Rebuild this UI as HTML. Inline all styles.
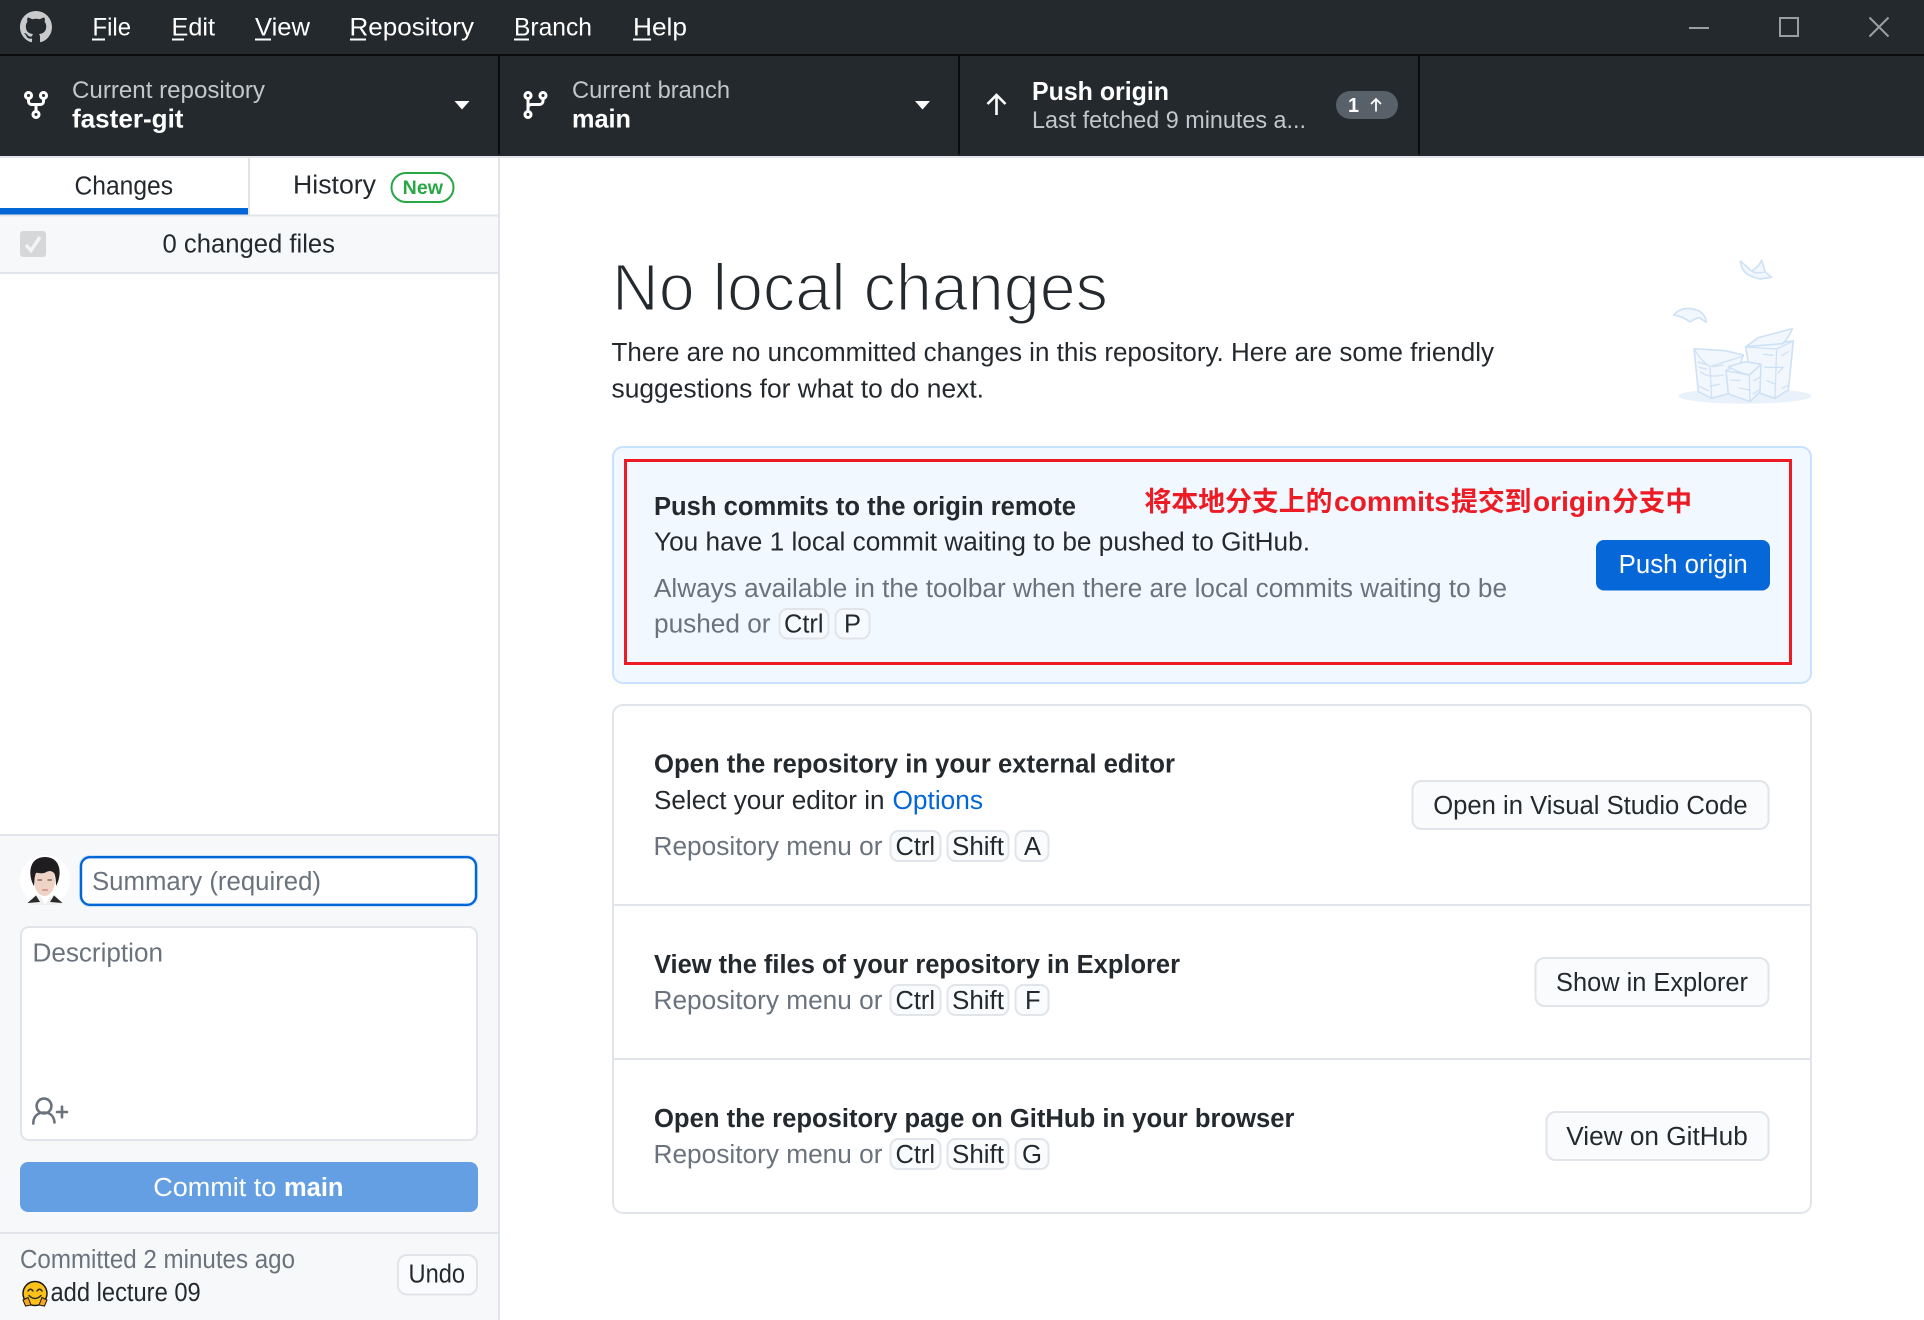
<!DOCTYPE html>
<html lang="en"><head><meta charset="utf-8"><title>GitHub Desktop</title>
<style>
html,body{margin:0;padding:0;background:#fff;width:1924px;height:1320px;overflow:hidden}
svg{display:block}
text{font-family:"Liberation Sans","Noto Sans CJK SC",sans-serif;font-size:25.5px;fill:#24292e;white-space:pre}
.b{font-weight:700}
.g{fill:#6a737d}
.m{fill:#fff;font-size:25px}
.s{fill:#c3c7cb;font-size:24px}
.w{fill:#fff;font-weight:700;font-size:26px}
.k{fill:#fafbfc;stroke:#e1e4e8;stroke-width:2}
.c{fill:#f6faff;stroke:#e1e4e8;stroke-width:2}
.p{stroke:#cfe2f5;stroke-width:5;fill:#f2f7fd;stroke-linejoin:round;stroke-linecap:round}
.l{stroke:#cfe2f5;stroke-width:4;fill:none;stroke-linecap:round}
.r{font-weight:700;fill:#ed1c24}
</style></head><body>
<svg xmlns="http://www.w3.org/2000/svg" width="1924" height="1320" viewBox="0 0 1924 1320">
<rect width="1924" height="1320" fill="#fff"/>

<!-- title bar -->
<rect width="1924" height="54" fill="#24292e"/>
<rect y="54" width="1924" height="2" fill="#0b0c0e"/>
<path transform="translate(20,11) scale(2)" fill="#c8cacc" d="M8 0C3.58 0 0 3.58 0 8c0 3.54 2.29 6.53 5.47 7.59.4.07.55-.17.55-.38 0-.19-.01-.82-.01-1.49-2.01.37-2.53-.49-2.69-.94-.09-.23-.48-.94-.82-1.13-.28-.15-.68-.52-.01-.53.63-.01 1.08.58 1.23.82.72 1.21 1.87.87 2.33.66.07-.52.28-.87.51-1.07-1.78-.2-3.64-.89-3.64-3.95 0-.87.31-1.59.82-2.15-.08-.2-.36-1.02.08-2.12 0 0 .67-.21 2.2.82.64-.18 1.32-.27 2-.27.68 0 1.36.09 2 .27 1.53-1.04 2.2-.82 2.2-.82.44 1.1.16 1.92.08 2.12.51.56.82 1.27.82 2.15 0 3.07-1.87 3.75-3.65 3.95.29.25.54.73.54 1.48 0 1.07-.01 1.93-.01 2.2 0 .21.15.46.55.38A8.013 8.013 0 0016 8c0-4.42-3.58-8-8-8z"/>
<text class="m" x="92.5" y="35.5" textLength="38.5" lengthAdjust="spacingAndGlyphs">File</text>
<text class="m" x="171.5" y="35.5" textLength="43.5" lengthAdjust="spacingAndGlyphs">Edit</text>
<text class="m" x="255" y="35.5" textLength="55" lengthAdjust="spacingAndGlyphs">View</text>
<text class="m" x="349.5" y="35.5" textLength="124.5" lengthAdjust="spacingAndGlyphs">Repository</text>
<text class="m" x="514" y="35.5" textLength="78" lengthAdjust="spacingAndGlyphs">Branch</text>
<text class="m" x="633" y="35.5" textLength="54" lengthAdjust="spacingAndGlyphs">Help</text>
<g fill="#fff">
<rect x="92" y="38.5" width="13" height="2"/><rect x="172" y="38.5" width="12" height="2"/><rect x="255" y="38.5" width="16" height="2"/><rect x="350" y="38.5" width="16" height="2"/><rect x="514" y="38.5" width="15" height="2"/><rect x="633" y="38.5" width="18" height="2"/>
</g>
<g fill="none" stroke="#9b9ea1" stroke-width="2">
<path d="M1689 28H1709"/><rect x="1780" y="18" width="18" height="18"/><path d="M1869.5 17.5L1888.5 36.5M1888.5 17.5L1869.5 36.5"/>
</g>

<!-- toolbar -->
<rect y="56" width="1924" height="100" fill="#24292e"/>
<rect y="156" width="1924" height="2" fill="#e1e4e8"/>
<g fill="#0b0c0e"><rect x="498" y="56" width="2" height="98.5"/><rect x="958" y="56" width="2" height="98.5"/><rect x="1418" y="56" width="2" height="98.5"/></g>
<path transform="translate(20,89) scale(2)" fill="#fff" d="M5 5.372v.878c0 .414.336.75.75.75h4.5a.75.75 0 00.75-.75v-.878a2.25 2.25 0 111.5 0v.878a2.25 2.25 0 01-2.25 2.25h-1.5v2.128a2.251 2.251 0 11-1.5 0V8.5h-1.5A2.25 2.25 0 013.5 6.25v-.878a2.25 2.25 0 111.5 0zM5 3.25a.75.75 0 10-1.5 0 .75.75 0 001.5 0zm6.75.75a.75.75 0 100-1.5.75.75 0 000 1.5zm-3 8.75a.75.75 0 10-1.5 0 .75.75 0 001.5 0z"/>
<text class="s" x="72" y="98" textLength="193" lengthAdjust="spacingAndGlyphs">Current repository</text>
<text class="w" x="72" y="127.5" textLength="111.5" lengthAdjust="spacingAndGlyphs">faster-git</text>
<path d="M454.5 101H469.5L462 109.5Z" fill="#fff"/>
<path transform="translate(519.5,89) scale(2)" fill="#fff" d="M9.5 3.25a2.25 2.25 0 113 2.122V6A2.5 2.5 0 0110 8.5H6a1 1 0 00-1 1v1.128a2.251 2.251 0 11-1.5 0V5.372a2.25 2.25 0 111.5 0v1.836A2.492 2.492 0 016 7h4a1 1 0 001-1v-.628A2.25 2.25 0 019.5 3.25zm-6 0a.75.75 0 101.5 0 .75.75 0 00-1.5 0zm8.25-.75a.75.75 0 100 1.5.75.75 0 000-1.5zM4.25 12a.75.75 0 100 1.5.75.75 0 000-1.5z"/>
<text class="s" x="572" y="98" textLength="158" lengthAdjust="spacingAndGlyphs">Current branch</text>
<text class="w" x="572" y="127.5" textLength="59" lengthAdjust="spacingAndGlyphs">main</text>
<path d="M915 101H930L922.5 109.5Z" fill="#fff"/>
<path d="M996.5 95V115M987.5 104L996.5 95L1005.5 104" fill="none" stroke="#fff" stroke-width="2.6"/>
<text class="w" x="1032" y="100" textLength="137" lengthAdjust="spacingAndGlyphs">Push origin</text>
<text class="s" x="1032" y="128" textLength="274" lengthAdjust="spacingAndGlyphs">Last fetched 9 minutes a...</text>
<rect x="1336" y="91" width="62" height="28" rx="14" fill="#586069"/>
<text class="w" x="1348" y="112" textLength="11" lengthAdjust="spacingAndGlyphs" style="font-size:20px">1</text>
<path d="M1376 99V111.5M1371 104L1376 99L1381 104" fill="none" stroke="#fff" stroke-width="1.8"/>

<!-- sidebar -->
<rect x="0" y="158" width="498" height="1162" fill="#f6f8fa"/>
<rect x="498" y="158" width="2" height="1162" fill="#e1e4e8"/>
<rect x="0" y="158" width="498" height="56.5" fill="#fff"/>
<rect x="248" y="158" width="2" height="56.5" fill="#e1e4e8"/>
<rect x="0" y="208" width="248" height="6.5" fill="#0366d6"/>
<rect x="0" y="214.5" width="498" height="2" fill="#e1e4e8"/>
<text x="74.5" y="194.5" textLength="98.5" lengthAdjust="spacingAndGlyphs">Changes</text>
<text x="293" y="193.5" textLength="83" lengthAdjust="spacingAndGlyphs">History</text>
<rect x="391.5" y="173" width="62" height="29" rx="14.5" fill="#fff" stroke="#28a745" stroke-width="2"/>
<text x="402.7" y="194" textLength="40.3" lengthAdjust="spacingAndGlyphs" class="b" style="font-size:19.5px;fill:#28a745">New</text>
<rect x="20" y="231" width="26" height="26" rx="3" fill="#d5d7d9"/>
<path d="M26 245L31 250.5L40 237" fill="none" stroke="#f4f5f6" stroke-width="3.4"/>
<text x="162.5" y="252.5" textLength="172.5" lengthAdjust="spacingAndGlyphs">0 changed files</text>
<rect x="0" y="272" width="498" height="2" fill="#e1e4e8"/>
<rect x="0" y="274" width="498" height="560" fill="#fff"/>
<rect x="0" y="834" width="498" height="2" fill="#e1e4e8"/>

<!-- avatar -->
<circle cx="45" cy="880" r="25" fill="#fff"/>
<path d="M27 904L36 895L41 897L45 905L50 897L55 895L63 904Q55 905 45 905Q35 905 27 904Z" fill="#f1efed"/>
<path d="M27.5 903L36 895.5L40 902Z M62.5 903L54 895.5L50 902Z" fill="#2a2a2c"/>
<ellipse cx="44.5" cy="881" rx="10.5" ry="15" fill="#efd4c6"/>
<path d="M34 886C28 876 28 857 45 857C62 857 62 876 56 886C56 880 55.5 876 54 873C50 869 47 872 44 873C40 874 37 872 36 873C34.5 876 34.500 880 34 886Z" fill="#1f1d1f"/>
<path d="M37.500 880h4.500M47.500 880h4.500" stroke="#6b5850" stroke-width="1.2"/><path d="M42 890h6" stroke="#c98d86" stroke-width="1.400"/>

<!-- summary -->
<rect x="79" y="855" width="399" height="52" rx="11" fill="#c8e1ff"/>
<rect x="81" y="857.2" width="395" height="47.6" rx="9" fill="#fff" stroke="#0366d6" stroke-width="2.4"/>
<text class="g" x="92" y="890" textLength="229" lengthAdjust="spacingAndGlyphs">Summary (required)</text>
<rect x="21" y="927" width="456" height="213" rx="8" fill="#fff" stroke="#e1e4e8" stroke-width="2"/>
<text class="g" x="32.5" y="961.5" textLength="130.5" lengthAdjust="spacingAndGlyphs">Description</text>
<g fill="none" stroke="#6a737d" stroke-width="2.6" stroke-linecap="round">
<circle cx="44" cy="1106" r="7.4"/><path d="M33.3 1123.5C33.3 1116.5 37.5 1112.5 44 1112.500C50.500 1112.500 54 1116.500 54.500 1122.500"/><path d="M57 1112H67M62 1106.700V1117.300"/>
</g>
<rect x="20" y="1162" width="458" height="50" rx="8" fill="#659fe3"/>
<text x="153.3" y="1196" textLength="123" lengthAdjust="spacingAndGlyphs" style="fill:#fff">Commit to</text>
<text x="284" y="1196" textLength="59.5" lengthAdjust="spacingAndGlyphs" class="b" style="fill:#fff">main</text>
<rect x="0" y="1232" width="498" height="2" fill="#e1e4e8"/>
<text class="g" x="20" y="1268" textLength="275" lengthAdjust="spacingAndGlyphs">Committed 2 minutes ago</text>
<circle cx="35" cy="1293.5" r="12" fill="#fcc21b" stroke="#1c1a14" stroke-width="1.5"/>
<path d="M28 1291q2.500-3.500 5 0M37 1291q2.500-3.500 5 0" fill="none" stroke="#2f2f2f" stroke-width="1.5" stroke-linecap="round"/>
<path d="M29 1295.500q6 6 12 0" fill="none" stroke="#2f2f2f" stroke-width="1.5" stroke-linecap="round"/>
<path d="M23 1300l5-2.500 3 7.500-5.500 1zM47 1300l-5-2.500-3 7.500 5.500 1z" fill="#f5a623" stroke="#1c1a14" stroke-width="1"/>
<text x="50.5" y="1301" textLength="150.200" lengthAdjust="spacingAndGlyphs">add lecture 09</text>
<rect class="k" x="398" y="1255" width="79" height="39.5" rx="9"/>
<text x="408.5" y="1282.5" textLength="56.5" lengthAdjust="spacingAndGlyphs">Undo</text>

<!-- main heading -->
<text x="612" y="310.5" textLength="496" lengthAdjust="spacingAndGlyphs" style="font-size:67px;stroke:#fff;stroke-width:1.9px">No local changes</text>
<text x="611.5" y="361" textLength="882.5" lengthAdjust="spacingAndGlyphs">There are no uncommitted changes in this repository. Here are some friendly</text>
<text x="611.5" y="397.5" textLength="372.5" lengthAdjust="spacingAndGlyphs">suggestions for what to do next.</text>

<!-- illustration -->
<g transform="translate(1660,250) scale(.3333)">
<ellipse cx="255" cy="438" rx="200" ry="23" fill="#e9f1fa"/>
<path class="p" d="M241 33C244 66 262 78 300 87L335 82L316 66L305 31Q296 50 275 63Z"/>
<path class="l" d="M275 63Q285 72 316 66"/>
<path class="p" d="M41 195C56 175 86 170 115 182C130 190 137 200 139 217L118 203Q105 205 90 216Q70 200 41 195Z"/>
<path class="p" d="M102 296L195 302L250 315L240 345L200 360L208 430L155 445L115 425Z"/>
<path class="l" d="M102 296Q125 335 150 350L250 318M150 350L155 445"/>
<path class="l" d="M115 337L145 345M122 365Q140 385 190 375M150 408L178 403M120 410L145 422M160 350L190 345M118 352L140 358"/>
<path class="p" d="M257 291L400 273L385 420L345 445L300 430L265 340Z"/>
<path class="l" d="M257 291L350 297L400 273M350 297L345 445"/>
<path class="p" d="M258 290L295 263L397 236Q385 265 368 281Z"/>
<path class="l" d="M310 313L340 316M365 317L385 305M315 352L370 352L355 368M320 392L345 402M365 415L385 406"/>
<path class="p" d="M198 362L268 375L303 343L300 425L270 455L205 432Z"/>
<path class="l" d="M268 375L270 455"/>
<path class="p" d="M205 350L256 335L303 343L268 375Q235 368 205 350Z"/>
<path class="l" d="M212 390L240 392M238 414L268 420M282 392L298 382M280 432L296 420"/>
</g>

<!-- push card -->
<rect x="613" y="447" width="1198" height="236" rx="10" fill="#f1f8ff" stroke="#c8e1ff" stroke-width="2"/>
<rect x="625.5" y="460.5" width="1165" height="203" fill="none" stroke="#ed1c24" stroke-width="3"/>
<text class="b" x="654" y="515" textLength="422" lengthAdjust="spacingAndGlyphs">Push commits to the origin remote</text>
<text class="r" x="1144.5" y="511" textLength="188" lengthAdjust="spacingAndGlyphs" style="font-size:27px">将本地分支上的</text>
<text class="r" x="1334" y="511" textLength="116" lengthAdjust="spacingAndGlyphs" style="font-size:28px">commits</text>
<text class="r" x="1451" y="511" textLength="80.5" lengthAdjust="spacingAndGlyphs" style="font-size:27px">提交到</text>
<text class="r" x="1533" y="511" textLength="78" lengthAdjust="spacingAndGlyphs" style="font-size:28px">origin</text>
<text class="r" x="1612" y="511" textLength="80" lengthAdjust="spacingAndGlyphs" style="font-size:27px">分支中</text>
<text x="654" y="550.5" textLength="656" lengthAdjust="spacingAndGlyphs">You have 1 local commit waiting to be pushed to GitHub.</text>
<text class="g" x="654" y="597" textLength="853" lengthAdjust="spacingAndGlyphs">Always available in the toolbar when there are local commits waiting to be</text>
<text class="g" x="654" y="632.5" textLength="116.5" lengthAdjust="spacingAndGlyphs">pushed or</text>
<rect class="c" x="779.5" y="609" width="49" height="29.5" rx="8"/>
<text x="784" y="632.5" textLength="39.5" lengthAdjust="spacingAndGlyphs">Ctrl</text>
<rect class="c" x="835.5" y="609" width="34" height="29.5" rx="8"/>
<text x="844" y="632.5" textLength="17" lengthAdjust="spacingAndGlyphs">P</text>
<rect x="1596" y="540" width="174" height="50.5" rx="8" fill="#0567d8"/>
<text x="1618.7" y="573" textLength="129" lengthAdjust="spacingAndGlyphs" style="fill:#fff">Push origin</text>

<!-- options card -->
<rect x="613" y="705" width="1198" height="508" rx="10" fill="#fff" stroke="#e1e4e8" stroke-width="2"/>
<rect x="613" y="904" width="1198" height="2" fill="#e1e4e8"/>
<rect x="613" y="1058" width="1198" height="2" fill="#e1e4e8"/>

<text class="b" x="654" y="772.5" textLength="521" lengthAdjust="spacingAndGlyphs">Open the repository in your external editor</text>
<text x="654" y="809" textLength="230.5" lengthAdjust="spacingAndGlyphs">Select your editor in</text>
<text x="892.5" y="809" textLength="90.5" lengthAdjust="spacingAndGlyphs" style="fill:#0366d6">Options</text>
<text class="g" x="653.5" y="855" textLength="229" lengthAdjust="spacingAndGlyphs">Repository menu or</text>
<rect class="k" x="890.5" y="831" width="50" height="30" rx="8"/>
<text x="895.5" y="855" textLength="39.5" lengthAdjust="spacingAndGlyphs">Ctrl</text>
<rect class="k" x="947.5" y="831" width="61" height="30" rx="8"/>
<text x="952" y="855" textLength="52" lengthAdjust="spacingAndGlyphs">Shift</text>
<rect class="k" x="1015.5" y="831" width="33" height="30" rx="8"/>
<text x="1024" y="855" textLength="17" lengthAdjust="spacingAndGlyphs">A</text>
<rect class="k" x="1412.5" y="781" width="356" height="48" rx="9"/>
<text x="1433.2" y="814" textLength="314.5" lengthAdjust="spacingAndGlyphs">Open in Visual Studio Code</text>

<text class="b" x="654" y="973" textLength="526" lengthAdjust="spacingAndGlyphs">View the files of your repository in Explorer</text>
<text class="g" x="653.5" y="1009" textLength="229" lengthAdjust="spacingAndGlyphs">Repository menu or</text>
<rect class="k" x="890.5" y="985" width="50" height="30" rx="8"/>
<text x="895.5" y="1009" textLength="39.5" lengthAdjust="spacingAndGlyphs">Ctrl</text>
<rect class="k" x="947.5" y="985" width="61" height="30" rx="8"/>
<text x="952" y="1009" textLength="52" lengthAdjust="spacingAndGlyphs">Shift</text>
<rect class="k" x="1015.5" y="985" width="33" height="30" rx="8"/>
<text x="1025" y="1009" textLength="15.6" lengthAdjust="spacingAndGlyphs">F</text>
<rect class="k" x="1535.5" y="958" width="233" height="48" rx="9"/>
<text x="1556" y="991" textLength="192" lengthAdjust="spacingAndGlyphs">Show in Explorer</text>

<text class="b" x="654" y="1127" textLength="640.5" lengthAdjust="spacingAndGlyphs">Open the repository page on GitHub in your browser</text>
<text class="g" x="653.5" y="1163" textLength="229" lengthAdjust="spacingAndGlyphs">Repository menu or</text>
<rect class="k" x="890.5" y="1139" width="50" height="30" rx="8"/>
<text x="895.5" y="1163" textLength="39.5" lengthAdjust="spacingAndGlyphs">Ctrl</text>
<rect class="k" x="947.5" y="1139" width="61" height="30" rx="8"/>
<text x="952" y="1163" textLength="52" lengthAdjust="spacingAndGlyphs">Shift</text>
<rect class="k" x="1015.5" y="1139" width="33" height="30" rx="8"/>
<text x="1022" y="1163" textLength="20" lengthAdjust="spacingAndGlyphs">G</text>
<rect class="k" x="1546.5" y="1112" width="222" height="48" rx="9"/>
<text x="1566.3" y="1145" textLength="181.5" lengthAdjust="spacingAndGlyphs">View on GitHub</text>
</svg>
</body></html>
